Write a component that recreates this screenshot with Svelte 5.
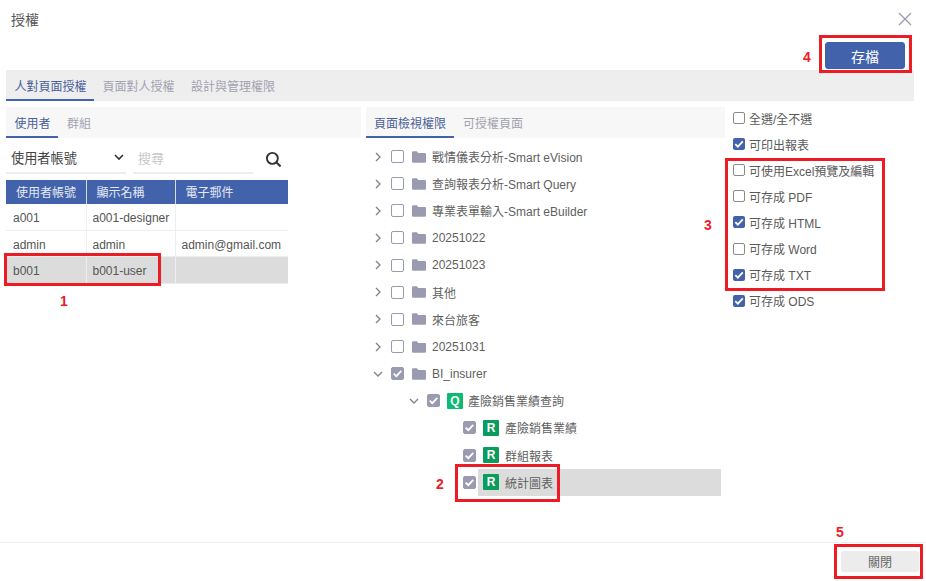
<script>
  const mainTabs = ['人對頁面授權', '頁面對人授權', '設計與管理權限'];
  const users = [
    { id: 'a001', name: 'a001-designer', mail: '' },
    { id: 'admin', name: 'admin', mail: 'admin@gmail.com' },
    { id: 'b001', name: 'b001-user', mail: '', active: true }
  ];
  const folders = [
    '戰情儀表分析-Smart eVision',
    '查詢報表分析-Smart Query',
    '專業表單輸入-Smart eBuilder',
    '20251022',
    '20251023',
    '其他',
    '來台旅客',
    '20251031'
  ];
  const reports = [
    { label: '產險銷售業績' },
    { label: '群組報表' },
    { label: '統計圖表', active: true }
  ];
  const options = [
    { label: '全選/全不選', on: false },
    { label: '可印出報表', on: true },
    { label: '可使用Excel預覽及編輯', on: false },
    { label: '可存成 PDF', on: false },
    { label: '可存成 HTML', on: true },
    { label: '可存成 Word', on: false },
    { label: '可存成 TXT', on: true },
    { label: '可存成 ODS', on: true }
  ];
</script>

{#snippet folderIcon()}
  <svg class="folder" viewBox="0 0 14 12" width="14" height="12"><path d="M0 1.5A1.2 1.2 0 0 1 1.2.3h3.6l1.5 1.6h6.5A1.2 1.2 0 0 1 14 3.1v7.4a1.2 1.2 0 0 1-1.2 1.2H1.2A1.2 1.2 0 0 1 0 10.500z" fill="#9a9ab0"/></svg>
{/snippet}

{#snippet chevron(open)}
  <svg class="chev" viewBox="0 0 10 10" width="10" height="10">
    {#if open}
      <path d="M1 3l4 4 4-4" fill="none" stroke="#80808c" stroke-width="1.3"/>
    {:else}
      <path d="M3 1l4 4-4 4" fill="none" stroke="#80808c" stroke-width="1.3"/>
    {/if}
  </svg>
{/snippet}

{#snippet treeCheck(on)}
  <span class="tree-check" class:on>
    {#if on}
      <svg viewBox="0 0 11 11" width="11" height="11"><path d="M1.700 5.600l2.600 2.500 5-5.300" fill="none" stroke="#fff" stroke-width="1.900"/></svg>
    {/if}
  </span>
{/snippet}

<div class="dialog">
  <header class="title-row">
    <span class="title">授權</span>
    <svg class="close" viewBox="0 0 14 14" width="14" height="14"><path d="M1 1l12 12M13 1L1 13" stroke="#9a9aac" stroke-width="1.300" fill="none"/></svg>
  </header>

  <div class="action-row">
    <button class="save">存檔</button>
  </div>

  <nav class="main-tabs">
    {#each mainTabs as tab, i}
      <span class="tab" class:active={i === 0}>{tab}</span>
    {/each}
  </nav>

  <div class="body">
    <section class="users">
      <div class="sub-tabs">
        <span class="tab active">使用者</span>
        <span class="tab">群組</span>
      </div>
      <div class="filters">
        <div class="select">
          <span>使用者帳號</span>
          <svg viewBox="0 0 10 10" width="10" height="10"><path d="M1 3l4 4 4-4" fill="none" stroke="#333" stroke-width="1.600"/></svg>
        </div>
        <div class="search">搜尋</div>
        <svg class="magnifier" viewBox="0 0 18 18" width="17" height="17"><circle cx="7.800" cy="7.800" r="5.800" fill="none" stroke="#333" stroke-width="2"/><path d="M12 12l4.500 4.500" stroke="#333" stroke-width="2.200"/></svg>
      </div>
      <table>
        <thead>
          <tr><th>使用者帳號</th><th>顯示名稱</th><th>電子郵件</th></tr>
        </thead>
        <tbody>
          {#each users as u}
            <tr class:active={u.active}><td>{u.id}</td><td>{u.name}</td><td>{u.mail}</td></tr>
          {/each}
        </tbody>
      </table>
    </section>

    <section class="pages">
      <div class="sub-tabs">
        <span class="tab active">頁面檢視權限</span>
        <span class="tab">可授權頁面</span>
      </div>
      <div class="tree">
        {#each folders as f}
          <div class="node">
            {@render chevron(false)}
            {@render treeCheck(false)}
            {@render folderIcon()}
            <span class="label">{f}</span>
          </div>
        {/each}
        <div class="node">
          {@render chevron(true)}
          {@render treeCheck(true)}
          {@render folderIcon()}
          <span class="label">BI_insurer</span>
        </div>
        <div class="node level-1">
          {@render chevron(true)}
          {@render treeCheck(true)}
          <span class="badge query">Q</span>
          <span class="label query-label">產險銷售業績查詢</span>
        </div>
        {#each reports as r}
          <div class="node level-2">
            {@render treeCheck(true)}
            <div class="leaf" class:active={r.active}>
              <span class="badge report">R</span>
              <span class="label">{r.label}</span>
            </div>
          </div>
        {/each}
      </div>
    </section>

    <section class="options">
      {#each options as o}
        <div class="option">
          <span class="box" class:on={o.on}>
            {#if o.on}
              <svg viewBox="0 0 12 12" width="12" height="12"><path d="M2.300 6.200l2.500 2.500 5-5.300" fill="none" stroke="#fff" stroke-width="1.800"/></svg>
            {/if}
          </span>
          <span>{o.label}</span>
        </div>
      {/each}
    </section>
  </div>

  <footer class="footer">
    <button class="closebtn">關閉</button>
  </footer>

  <!-- red callouts drawn over the dialog -->
  <div class="mark m1"></div>
  <div class="mark m2"></div>
  <div class="mark m3"></div>
  <div class="mark m4"></div>
  <div class="mark m5"></div>
  <span class="num n1">1</span>
  <span class="num n2">2</span>
  <span class="num n3">3</span>
  <span class="num n4">4</span>
  <span class="num n5">5</span>
</div>

<style>
  :global(body) {
    margin: 0;
    background: #fff;
  }
  .dialog {
    position: relative;
    width: 926px;
    height: 581px;
    overflow: hidden;
    box-sizing: border-box;
    font-family: "Liberation Sans", "Noto Sans CJK TC", sans-serif;
    font-size: 12px;
    color: #555;
  }
  .title-row {
    display: flex;
    justify-content: space-between;
    align-items: center;
    height: 37px;
    padding: 0 14px 0 11px;
  }
  .title {
    font-size: 14px;
    color: #555;
  }
  .action-row {
    display: flex;
    justify-content: flex-end;
    height: 33px;
    padding: 5px 21px 0 0;
    box-sizing: border-box;
  }
  .save {
    width: 80px;
    height: 27px;
    margin: 0;
    padding: 0;
    border: 1px solid #3f60a8;
    border-radius: 3px;
    background: #4263ab;
    color: #fff;
    font: inherit;
    font-size: 14px;
  }
  .main-tabs {
    display: flex;
    height: 31px;
    margin: 0 12px 0 6px;
    background: #eeeeee;
    box-sizing: border-box;
  }
  .tab {
    display: flex;
    align-items: center;
    padding: 2px 9px 0;
    color: #a2a2ae;
    font-size: 12px;
    box-sizing: border-box;
    border-bottom: 2px solid transparent;
  }
  .tab.active {
    color: #4a5f96;
    border-bottom-color: #4263ab;
  }
  .main-tabs .tab {
    width: 88px;
    justify-content: center;
    padding: 2px 0 0 1px;
  }
  .main-tabs .tab:nth-child(3) {
    width: auto;
    padding: 2px 0 0 9px;
  }
  .body {
    display: grid;
    grid-template-columns: 355px 359px 1fr;
    column-gap: 5px;
    margin: 6px 0 0 6px;
    height: 435px;
  }
  .sub-tabs {
    display: flex;
    height: 31px;
    background: #f7f7f7;
  }
  .users .tab.active {
    width: 52px;
    justify-content: center;
    padding: 2px 0 0 1px;
  }
  .pages .tab.active {
    width: 88px;
    justify-content: center;
    padding: 2px 0 0;
  }
  .filters {
    display: flex;
    align-items: flex-start;
    height: 42px;
    width: 282px;
  }
  .select {
    display: flex;
    align-items: center;
    justify-content: space-between;
    width: 120px;
    height: 36px;
    box-sizing: border-box;
    padding: 4px 2px 0 5px;
    border-bottom: 2px solid #eeeeee;
    color: #444;
    font-size: 13.200px;
  }
  .search {
    display: flex;
    align-items: center;
    width: 120px;
    height: 36px;
    margin-left: 7px;
    padding: 4px 0 0 5px;
    box-sizing: border-box;
    border-bottom: 2px solid #eeeeee;
    color: #c8c8c8;
    font-size: 13px;
  }
  .magnifier {
    align-self: center;
    margin-left: 12px;
  }
  table {
    width: 282px;
    border-collapse: collapse;
    table-layout: fixed;
  }
  th {
    height: 24px;
    padding: 0 0 1px 10px;
    background: #4263ab;
    color: #e6e9f2;
    font-size: 12px;
    font-weight: 400;
    text-align: left;
    border-right: 1px solid #d6dcea;
    box-sizing: border-box;
  }
  th:nth-child(1) { width: 80px; }
  th:nth-child(2) { width: 89px; }
  th:nth-child(3) { border-right: 0; }
  td {
    height: 26px;
    padding: 3px 0 0 7px;
    border-bottom: 1px solid #eeeeee;
    border-right: 1px solid #eeeeee;
    box-sizing: border-box;
    white-space: nowrap;
  }
  td:nth-child(2) { padding-left: 6px; }
  td:nth-child(3) { border-right: 0; padding-left: 6px; }
  tr.active td {
    background: #dcdcdc;
    height: 27px;
  }
  .tree {
    padding: 5px 4px 0 0;
  }
  .node {
    display: flex;
    align-items: center;
    height: 27.150px;
    padding-left: 7px;
  }
  .level-1 { padding-left: 43px; }
  .level-2 {
    padding-left: 97px;
  }
  .chev {
    margin-right: 8px;
    flex: none;
  }
  .tree-check {
    display: inline-flex;
    align-items: center;
    justify-content: center;
    width: 11px;
    height: 11px;
    border: 1px solid #9a9ab0;
    border-radius: 2px;
    box-sizing: content-box;
    flex: none;
  }
  .tree-check.on {
    background: #9a9ab0;
  }
  .folder {
    margin-left: 8px;
    flex: none;
  }
  .label {
    margin-left: 6px;
    color: #5f5f5f;
    font-size: 12px;
    white-space: nowrap;
  }
  .query-label {
    margin-left: 5px;
  }
  .badge {
    display: inline-flex;
    align-items: center;
    justify-content: center;
    width: 16px;
    height: 16px;
    margin-left: 7px;
    border-radius: 1px;
    color: #fff;
    font-size: 12px;
    font-weight: 700;
    flex: none;
  }
  .query { background: #0cbb72; }
  .report { background: #0a9c5c; }
  .leaf {
    display: flex;
    align-items: center;
    flex: 1;
    height: 27px;
    margin-left: 2px;
  }
  .leaf .badge { margin-left: 5px; }
  .leaf.active { background: #dcdcdc; }
  .options {
    display: flex;
    flex-direction: column;
    margin: -2px 0 0 3px;
  }
  .option {
    display: flex;
    align-items: center;
    gap: 4px;
    height: 26.100px;
    font-size: 12px;
    color: #5a5a5a;
    white-space: nowrap;
  }
  .box {
    display: inline-flex;
    align-items: center;
    justify-content: center;
    width: 10px;
    height: 10px;
    border: 1px solid #8a8a8a;
    border-radius: 2px;
    flex: none;
  }
  .box.on {
    width: 12px;
    height: 12px;
    border: 0;
    background: #4263ab;
  }
  .footer {
    display: flex;
    justify-content: flex-end;
    align-items: flex-start;
    height: 39px;
    padding: 8px 7px 0 0;
    box-sizing: border-box;
    border-top: 1px solid #eeeeee;
  }
  .closebtn {
    width: 78px;
    height: 21px;
    margin: 0;
    padding: 0;
    border: 0;
    border-radius: 2px;
    background: #ececec;
    color: #666;
    font: inherit;
    font-size: 12px;
  }
  .mark {
    position: absolute;
    border: 3px solid #ed1c24;
    box-sizing: border-box;
  }
  .m1 { left: 4px; top: 253px; width: 157px; height: 33px; }
  .m2 { left: 455px; top: 464px; width: 105px; height: 38px; }
  .m3 { left: 725px; top: 158px; width: 160px; height: 133px; }
  .m4 { left: 819px; top: 35px; width: 93px; height: 38px; }
  .m5 { left: 834px; top: 544px; width: 89px; height: 35px; }
  .num {
    position: absolute;
    color: #ed1c24;
    font-family: "Liberation Sans", sans-serif;
    font-size: 14px;
    font-weight: 700;
    line-height: 14px;
  }
  .n1 { left: 60px; top: 294px; }
  .n2 { left: 436px; top: 477px; }
  .n3 { left: 704px; top: 218px; }
  .n4 { left: 803px; top: 50px; }
  .n5 { left: 836px; top: 525px; }
</style>
